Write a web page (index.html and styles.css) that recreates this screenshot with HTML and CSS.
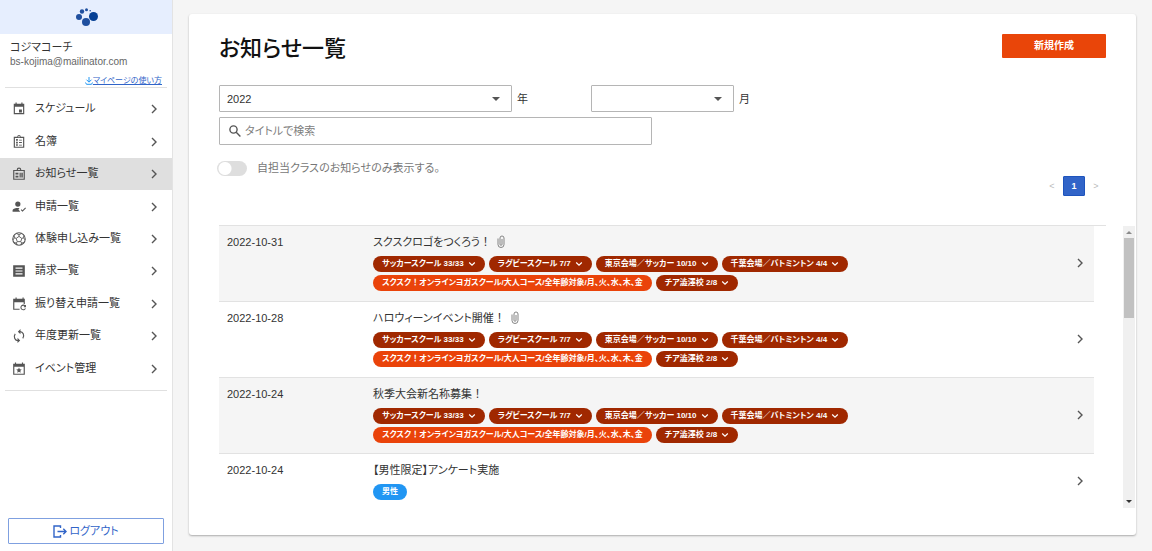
FILE: index.html
```html
<!DOCTYPE html>
<html lang="ja">
<head>
<meta charset="utf-8">
<title>お知らせ一覧</title>
<link rel="stylesheet" href="styles.css">
</head>
<body>
<svg class="defs" aria-hidden="true">
  <symbol id="chev" viewBox="0 0 8 10"><path d="M2 1l4 4-4 4" fill="none" stroke="currentColor" stroke-width="1.4"/></symbol>
  <symbol id="down" viewBox="0 0 8 6"><path d="M1.2 1.5L4 4.2l2.800-2.700" fill="none" stroke="currentColor" stroke-width="1.200"/></symbol>
  <symbol id="clip" viewBox="0 0 8 14"><path d="M1 3.500v6a3 3 0 0 0 6 0V3a2 2 0 0 0-4 0v6.300a1 1 0 0 0 2 0V4" fill="none" stroke="currentColor" stroke-width=".9"/></symbol>
</svg>
<div class="app">
  <aside class="sidebar">
    <div class="brand">
      <svg class="logo" viewBox="0 0 24 20" role="img" aria-label="ロゴ"><g fill="#1f4f9f"><circle cx="5" cy="10" r="3"/><circle cx="8" cy="4.500" r="2.200"/><circle cx="12.500" cy="2.800" r="1.500"/><circle cx="16.200" cy="3.800" r=".8"/><circle cx="12" cy="15" r="4"/></g><circle cx="19.500" cy="9.500" r="4.500" fill="#053f94"/></svg>
    </div>
    <div class="user">
      <div class="user-name">コジマコーチ</div>
      <div class="user-mail">bs-kojima@mailinator.com</div>
      <a class="guide" href="#"><svg viewBox="0 0 8 8"><path d="M4 0v5M1.500 2.700L4 5.200l2.500-2.500M.5 5.500l1 1.800h5l1-1.800" fill="none" stroke="#2196f3"/></svg>マイページの使い方</a>
    </div>
    <nav class="nav">
      <a href="#"><svg class="ico" viewBox="0 0 24 24"><path d="M17 13h-5v5h5v-5zM16 1v2H8V1H6v2H3v18h18V3h-3V1h-2zm3 18H5V8h14v11z"/></svg><span>スケジュール</span><svg class="chev"><use href="#chev"/></svg></a>
      <a href="#"><svg class="ico" viewBox="0 0 24 24"><path d="M21 3h-6a3 3 0 0 0-6 0H3v19h18V3zM19 20H5V5h14v15zM11 1.800h2v2h-2zM7 7h3v3H7zm5 1h5v1.500h-5zM7 11.500h3v3H7zm5 .5h5v1.500h-5zM7 16h3v2.500H7zm5 .5h5V18h-5z"/></svg><span>名簿</span><svg class="chev"><use href="#chev"/></svg></a>
      <a class="active" href="#" aria-current="page"><svg class="ico" viewBox="0 0 24 24"><path d="M22 5h-6a4 4 0 0 0-8 0H2v17h20V5zm-2 15H4V7h16v13zM10 5a2 2 0 0 1 4 0zM6 10h5v3H6zm0 5h5v3H6zm7-5h2v8h-2zm3 0h2.500v8H16z"/></svg><span>お知らせ一覧</span><svg class="chev"><use href="#chev"/></svg></a>
      <a href="#"><svg class="ico" viewBox="0 0 24 24"><circle cx="10" cy="7" r="4.500"/><path d="M1 20v-3c2-3 8-4 12-3l-2 2 3 4zM15 17l3 3 6-6-1.300-1.300L18 17.400l-1.700-1.700z"/></svg><span>申請一覧</span><svg class="chev"><use href="#chev"/></svg></a>
      <a href="#"><svg class="ico" viewBox="0 0 24 24"><path d="M12 7.500l4.800 3.500-1.800 5.500H9L7.200 11zM12 7.500V5L8 2.600M12 5l4-2.400M16.800 11l2.700-1 1-4.200M19.500 10l3 3.500M15 16.500l1.500 2.300 4.300-.5M16.500 18.800L15 22.500M9 16.500l-1.500 2.300-4.300-.5M7.500 18.800L9 22.500M7.200 11l-2.700-1-1-4.200M4.500 10l-3 3.500" fill="none" stroke="#555" stroke-width="1.500"/><circle cx="12" cy="12" r="10.700" fill="none" stroke="#555" stroke-width="1.800"/></svg><span>体験申し込み一覧</span><svg class="chev"><use href="#chev"/></svg></a>
      <a href="#"><svg class="ico" viewBox="0 0 24 24"><path d="M2 2h20v20H2zM6 6v2h12V6zM6 11v2h12v-2zM6 16v2h12v-2z" fill-rule="evenodd"/></svg><span>請求一覧</span><svg class="chev"><use href="#chev"/></svg></a>
      <a href="#"><svg class="ico" viewBox="0 0 24 24"><path d="M18 1v2H8V1H6v2H2v19h11v-2H4V9h16v3h2V3h-2V1z"/><path d="M22.500 15.500A4 4 0 1 0 23 19.500M23.500 13.500v3.200h-3.200" fill="none" stroke="#555" stroke-width="1.800"/></svg><span>振り替え申請一覧</span><svg class="chev"><use href="#chev"/></svg></a>
      <a href="#"><svg class="ico" viewBox="0 0 24 24"><path d="M13 4.500c6-.5 9 6.500 5.500 11.500M11 20c-6 .5-9-6.500-5.500-11.500" fill="none" stroke="#555" stroke-width="2"/><path d="M14.500 0v9L10 4.500zM9.500 24v-9l4.500 4.500z"/></svg><span>年度更新一覧</span><svg class="chev"><use href="#chev"/></svg></a>
      <a href="#"><svg class="ico" viewBox="0 0 24 24"><path d="M17 1v2H7V1H5v2H2v19h20V3h-3V1zM4 8h16v12H4zM12 9.500l1.400 3 3.300.4-2.400 2.200.6 3.300-2.900-1.700-2.900 1.700.6-3.300-2.400-2.200 3.300-.4z" fill-rule="evenodd"/></svg><span>イベント管理</span><svg class="chev"><use href="#chev"/></svg></a>
    </nav>
    <button class="logout" type="button"><svg viewBox="0 0 14 13"><path d="M7.500 3V1H1v11h6.500v-2M4.500 6.500H13M10.300 3.800L13 6.500l-2.700 2.700" fill="none" stroke="currentColor" stroke-width="1.400"/></svg>ログアウト</button>
  </aside>
  <main class="main">
    <section class="card">
      <header class="head">
        <h1>お知らせ一覧</h1>
        <button class="create" type="button">新規作成</button>
      </header>
      <div class="filters">
        <div class="field year">
          <div class="select"><select id="year"><option>2022</option></select><svg viewBox="0 0 8 4"><path d="M0 0h8L4 4z"/></svg></div>
          <label for="year">年</label>
        </div>
        <div class="field month">
          <div class="select"><select id="month"><option></option></select><svg viewBox="0 0 8 4"><path d="M0 0h8L4 4z"/></svg></div>
          <label for="month">月</label>
        </div>
      </div>
      <div class="search">
        <svg viewBox="0 0 12 12"><circle cx="4.500" cy="4.500" r="3.600"/><path d="M7.200 7.200l4.200 4.200"/></svg>
        <input type="text" placeholder="タイトルで検索" aria-label="タイトルで検索">
      </div>
      <label class="toggle"><input type="checkbox"><span>自担当クラスのお知らせのみ表示する。</span></label>
      <nav class="pager" aria-label="ページ">
        <button type="button" disabled>&lt;</button>
        <button class="current" type="button">1</button>
        <button type="button" disabled>&gt;</button>
      </nav>
      <div class="list-wrap">
        <ul class="list">
          <li>
            <time>2022-10-31</time>
            <div class="body">
              <div class="title">スクスクロゴをつくろう<span class="full">！</span><svg><use href="#clip"/></svg></div>
              <div class="chips">
                <button class="chip" type="button">サッカースクール 33/33<svg><use href="#down"/></svg></button>
                <button class="chip" type="button">ラグビースクール 7/7<svg><use href="#down"/></svg></button>
                <button class="chip" type="button">東京会場／サッカー 10/10<svg><use href="#down"/></svg></button>
                <button class="chip" type="button">千葉会場／バトミントン 4/4<svg><use href="#down"/></svg></button>
                <span class="chip bright"><span>スクスク<span class="full">！</span>オンラインヨガスクール/大人コース/全年齢対象/月、火、水、木、金</span></span>
                <button class="chip" type="button">チア澁澤校 2/8<svg><use href="#down"/></svg></button>
              </div>
            </div>
            <a class="go" href="#" aria-label="詳細"><svg class="chev"><use href="#chev"/></svg></a>
          </li>
          <li>
            <time>2022-10-28</time>
            <div class="body">
              <div class="title">ハロウィーンイベント開催<span class="full">！</span><svg><use href="#clip"/></svg></div>
              <div class="chips">
                <button class="chip" type="button">サッカースクール 33/33<svg><use href="#down"/></svg></button>
                <button class="chip" type="button">ラグビースクール 7/7<svg><use href="#down"/></svg></button>
                <button class="chip" type="button">東京会場／サッカー 10/10<svg><use href="#down"/></svg></button>
                <button class="chip" type="button">千葉会場／バトミントン 4/4<svg><use href="#down"/></svg></button>
                <span class="chip bright"><span>スクスク<span class="full">！</span>オンラインヨガスクール/大人コース/全年齢対象/月、火、水、木、金</span></span>
                <button class="chip" type="button">チア澁澤校 2/8<svg><use href="#down"/></svg></button>
              </div>
            </div>
            <a class="go" href="#" aria-label="詳細"><svg class="chev"><use href="#chev"/></svg></a>
          </li>
          <li>
            <time>2022-10-24</time>
            <div class="body">
              <div class="title">秋季大会新名称募集<span class="full">！</span></div>
              <div class="chips">
                <button class="chip" type="button">サッカースクール 33/33<svg><use href="#down"/></svg></button>
                <button class="chip" type="button">ラグビースクール 7/7<svg><use href="#down"/></svg></button>
                <button class="chip" type="button">東京会場／サッカー 10/10<svg><use href="#down"/></svg></button>
                <button class="chip" type="button">千葉会場／バトミントン 4/4<svg><use href="#down"/></svg></button>
                <span class="chip bright"><span>スクスク<span class="full">！</span>オンラインヨガスクール/大人コース/全年齢対象/月、火、水、木、金</span></span>
                <button class="chip" type="button">チア澁澤校 2/8<svg><use href="#down"/></svg></button>
              </div>
            </div>
            <a class="go" href="#" aria-label="詳細"><svg class="chev"><use href="#chev"/></svg></a>
          </li>
          <li>
            <time>2022-10-24</time>
            <div class="body">
              <div class="title">【男性限定】アンケート実施</div>
              <div class="chips"><span class="chip blue">男性</span></div>
            </div>
            <a class="go" href="#" aria-label="詳細"><svg class="chev"><use href="#chev"/></svg></a>
          </li>
        </ul>
        <div class="scrollbar" aria-hidden="true">
          <svg viewBox="0 0 12 12"><path d="M3 8h6L6 5z" fill="#8a8a8a"/></svg>
          <div class="thumb"></div>
          <svg viewBox="0 0 12 12"><path d="M3 4h6L6 7z" fill="#333"/></svg>
        </div>
      </div>
    </section>
  </main>
</div>
</body>
</html>
```
FILE: styles.css
```css
* { box-sizing: border-box; }
body {
  margin: 0;
  background: #f5f5f5;
  color: #333;
  font: 11px/16px "Liberation Sans", "Noto Sans CJK JP", sans-serif;
  font-feature-settings: "palt";
}
button, input, select { font: inherit; font-feature-settings: inherit; color: inherit; }
button { cursor: pointer; }
a { color: inherit; text-decoration: none; }
svg { display: block; flex: none; }
.defs { position: absolute; width: 0; height: 0; }
.app { display: flex; min-height: 100vh; }

.sidebar {
  display: flex;
  flex-direction: column;
  flex: none;
  width: 173px;
  background: #fff;
  border-right: 1px solid #e3e3e3;
}
.brand { display: flex; justify-content: center; align-items: center; height: 34px; background: #e6eefe; }
.logo { width: 24px; height: 20px; }
.user { margin: 0 5px; padding: 5px 5px 0; border-bottom: 1px solid #e0e0e0; }
.user-mail { font-size: 10px; line-height: 13px; color: #666; }
.guide {
  display: flex;
  justify-content: flex-end;
  align-items: center;
  margin-top: 6px;
  line-height: 13px;
  font-size: 8px;
  color: #3164c8;
  text-decoration: underline;
}
.guide svg { width: 8px; height: 8px; }
.nav {
  display: grid;
  min-height: 303px;
  margin: 0 5px;
  padding: 5px 0;
  border-bottom: 1px solid #e0e0e0;
}
.nav a { display: flex; align-items: center; margin: 0 -5px; padding: 0 14px 0 12px; }
.nav .active { background: #dfdfdf; }
.nav span { flex: 1; padding-bottom: 2px; }
.ico { width: 14px; height: 14px; margin-right: 9px; fill: #555; }
.chev { width: 8px; height: 10px; color: #555; }
.logout {
  display: flex;
  justify-content: center;
  align-items: center;
  gap: 2px;
  height: 26px;
  margin: auto 8px 7px;
  padding: 0;
  border: 1px solid #7fa0e0;
  border-radius: 1px;
  background: #fff;
  color: #3164c8;
}
.logout svg { width: 14px; height: 13px; }

.main { display: flex; flex: 1; min-width: 0; padding: 14px 16px 16px; }
.card {
  display: flex;
  flex: 1;
  min-width: 0;
  flex-direction: column;
  padding: 20px 0 24px 30px;
  border-radius: 3px;
  background: #fff;
  box-shadow: 0 1px 2px #aaa;
}
.head { display: flex; justify-content: space-between; align-items: flex-start; padding-right: 30px; }
h1 { margin: 0; font-size: 22px; line-height: 30px; font-weight: 500; color: #111; }
.create {
  width: 104px;
  height: 24px;
  padding: 0;
  border: 0;
  border-radius: 1px;
  background: #e94509;
  color: #fff;
  font-size: 10px;
  font-weight: 700;
}
.filters { display: flex; gap: 63px; margin-top: 21px; }
.field { display: flex; align-items: center; gap: 5px; }
.select { position: relative; }
.year .select { width: 293px; }
.month .select { width: 143px; }
.select select {
  display: block;
  width: 100%;
  height: 27px;
  padding: 0 7px;
  border: 1px solid #b5b5b5;
  border-radius: 1px;
  background: #fff;
  appearance: none;
}
.select svg { position: absolute; right: 12px; top: 12px; width: 8px; height: 4px; fill: #555; }
.search {
  display: flex;
  align-items: center;
  gap: 4px;
  width: 433px;
  height: 28px;
  margin-top: 5px;
  padding: 0 9px;
  border: 1px solid #b5b5b5;
  border-radius: 1px;
}
.search svg { width: 12px; height: 12px; fill: none; stroke: #555; stroke-width: 1.400; }
.search input { flex: 1; min-width: 0; padding: 0; border: 0; outline: 0; background: none; }
.search input::placeholder { color: #808080; }
.toggle { display: flex; align-items: center; gap: 10px; margin: 15px 0 0 -2px; color: #777; align-self: flex-start; }
.toggle input {
  width: 30px;
  height: 15px;
  margin: 0;
  border-radius: 8px;
  background: radial-gradient(circle at 8px 50%, #fff 6px, #dedede 7px);
  appearance: none;
}
.pager { display: flex; justify-content: flex-end; align-items: center; padding-right: 29px; font-size: 9px; }
.pager button { width: 22px; height: 20px; padding: 0; border: 0; background: none; color: #bbb; }
.pager .current { border: 1px solid #1e54bd; border-radius: 1px; background: #3164c8; color: #fff; font-weight: 700; }

.list-wrap { display: flex; flex: 1; gap: 17px; margin-top: 29px; }
.list {
  flex: 1;
  min-width: 0;
  margin: 0;
  padding: 0 12px 0 0;
  border-top: 1px solid #e2e2e2;
  list-style: none;
}
.list li {
  display: grid;
  grid-template-columns: 146px 1fr 8px;
  align-items: start;
  padding: 8px 10px 10px 8px;
}
.list li + li { border-top: 1px solid #e2e2e2; }
.list li:nth-child(odd) { background: #f5f5f5; }
.title { display: flex; align-items: center; }
.title svg { width: 8px; height: 14px; margin-left: 6px; color: #777; }
.full { font-feature-settings: normal; }
.chips { display: flex; flex-wrap: wrap; gap: 3px 4px; max-width: 500px; margin-top: 6px; }
.chip {
  display: flex;
  align-items: center;
  gap: 4px;
  height: 16px;
  padding: 0 9px;
  border: 0;
  border-radius: 8px;
  background: #a02800;
  color: #fff;
  font-size: 8px;
  font-weight: 700;
  white-space: nowrap;
}
.chip svg { width: 8px; height: 6px; }
.bright { background: #ea430a; }
.blue { background: #2196f3; }
.go { align-self: center; }
.scrollbar { display: flex; flex-direction: column; width: 12px; margin: 1px 1px 3px 0; background: #f0f0f0; }
.scrollbar svg { width: 12px; height: 12px; }
.thumb { height: 80px; margin: 0 1px auto; background: #c1c1c1; }
```
